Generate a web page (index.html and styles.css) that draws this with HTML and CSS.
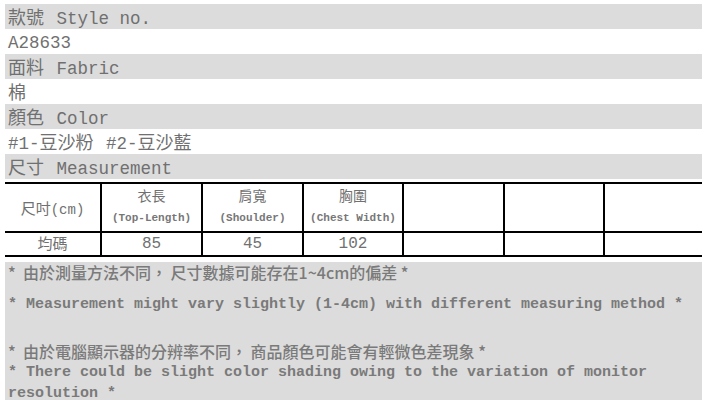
FILE: index.html
```html
<!DOCTYPE html>
<html lang="zh-Hant">
<head>
    <meta charset="UTF-8">
    <title>商品規格</title>
    <link rel="stylesheet" href="styles.css">
</head>
<body>
    <div class="spec">
        <div class="row shade"><span class="zh">款號</span> Style no.</div>
        <div class="row">A28633</div>
        <div class="row shade"><span class="zh">面料</span> Fabric</div>
        <div class="row"><span class="zh">棉</span></div>
        <div class="row shade"><span class="zh">顏色</span> Color</div>
        <div class="row">#1-<span class="zh">豆沙粉</span> #2-<span class="zh">豆沙藍</span></div>
        <div class="row shade"><span class="zh">尺寸</span> Measurement</div>
    </div>

    <table class="size-table">
        <colgroup>
            <col style="width: 97px">
            <col style="width: 101px">
            <col style="width: 101px">
            <col style="width: 100px">
            <col style="width: 101px">
            <col style="width: 100px">
            <col style="width: 99px">
        </colgroup>
        <tr class="head">
            <td><span class="zh-first">尺吋</span><span class="unit">(cm)</span></td>
            <td><span class="zh-head">衣長</span><span class="en-head">(Top-Length)</span></td>
            <td><span class="zh-head">肩寬</span><span class="en-head">(Shoulder)</span></td>
            <td><span class="zh-head">胸圍</span><span class="en-head">(Chest Width)</span></td>
            <td></td>
            <td></td>
            <td></td>
        </tr>
        <tr class="body">
            <td><span class="zh-cell">均碼</span></td>
            <td>85</td>
            <td>45</td>
            <td>102</td>
            <td></td>
            <td></td>
            <td></td>
        </tr>
    </table>

    <div class="notes">
        <p class="note-zh">*&nbsp; 由於測量方法不同，&nbsp;尺寸數據可能存在1~4cm的偏差 *</p>
        <p class="note-en gap-sm">* Measurement might vary slightly (1-4cm) with different measuring method *</p>
        <p class="note-zh gap-lg">*&nbsp; 由於電腦顯示器的分辨率不同，&nbsp;商品顏色可能會有輕微色差現象 *</p>
        <p class="note-en">* There could be slight color shading owing to the variation of monitor resolution *</p>
    </div>
</body>
</html>
```

FILE: styles.css
```css
body {
    margin: 4px 5px;
    font-family: "Liberation Mono", "Noto Sans CJK TC", monospace;
    color: #707070;
    background: #fff;
}
.spec {
    width: 697px;
}
.row {
    box-sizing: border-box;
    height: 25px;
    line-height: 25px;
    padding: 2px 0 0 3px;
    font-size: 17.5px;
    white-space: nowrap;
}
.shade {
    background: #dcdcdc;
}
.zh {
    font-family: "Noto Sans CJK TC", sans-serif;
    font-size: 18px;
    line-height: 20px;
    margin-right: 2px;
}
.size-table {
    margin: 3px 0 0 -2px;
    width: 699px;
    border-collapse: collapse;
    table-layout: fixed;
}
.size-table td {
    border: 2px solid #000;
    padding: 0;
    text-align: center;
    color: #707070;
}
.head td {
    height: 47px;
}
.body td {
    height: 19px;
    line-height: 19px;
    font-size: 16px;
}
.zh-first {
    font-family: "Noto Sans CJK TC", sans-serif;
    font-size: 15px;
}
.unit {
    font-size: 14px;
}
.zh-head {
    display: block;
    font-family: "Noto Sans CJK TC", sans-serif;
    font-size: 14px;
    line-height: 21px;
}
.en-head {
    display: block;
    font-size: 11px;
    font-weight: bold;
    line-height: 25px;
    color: #777;
}
.zh-cell {
    font-family: "Noto Sans CJK TC", sans-serif;
    font-size: 15px;
}
.notes {
    margin-top: 5px;
    width: 694px;
    height: 138px;
    padding-left: 3px;
    background: #dcdcdc;
}
.notes p {
    margin: 0;
    line-height: 21px;
    color: #7a7a7a;
}
.note-zh {
    font-family: "Noto Sans CJK TC", sans-serif;
    font-size: 16px;
    font-weight: 500;
}
.note-en {
    font-size: 15px;
    font-weight: bold;
}
.gap-sm {
    margin-top: 11px !important;
}
.gap-lg {
    margin-top: 26px !important;
}
```
